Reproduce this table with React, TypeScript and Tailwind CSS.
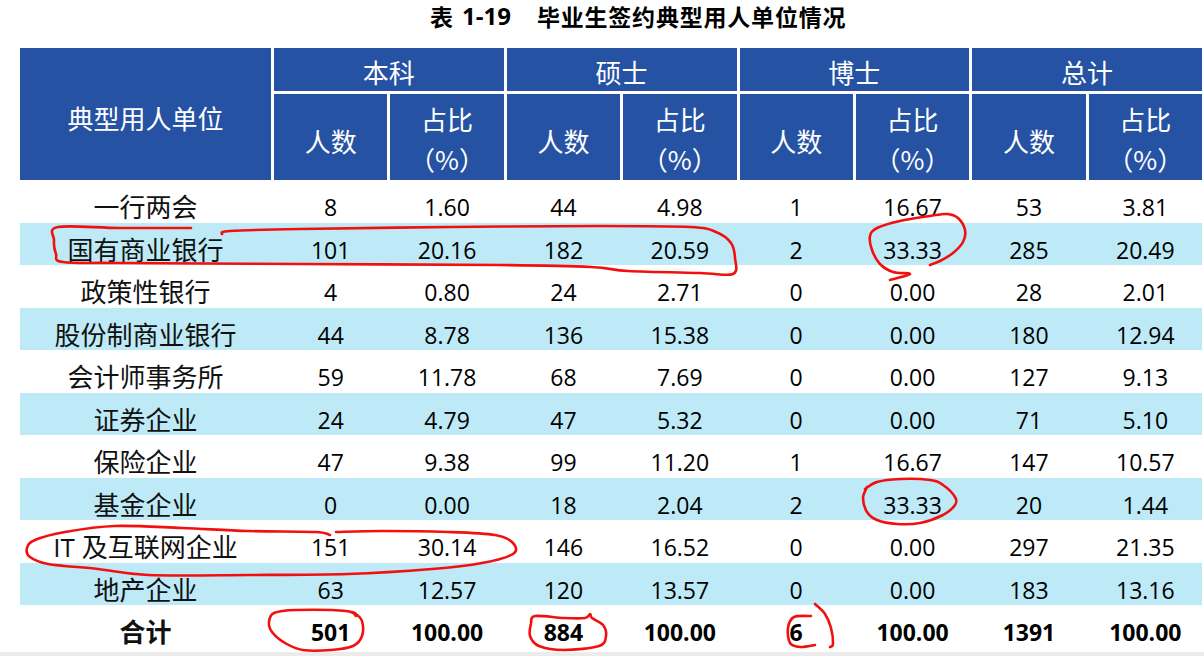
const rows: string[][] = [
  ['一行两会', '8', '1.60', '44', '4.98', '1', '16.67', '53', '3.81'],
  ['国有商业银行', '101', '20.16', '182', '20.59', '2', '33.33', '285', '20.49'],
  ['政策性银行', '4', '0.80', '24', '2.71', '0', '0.00', '28', '2.01'],
  ['股份制商业银行', '44', '8.78', '136', '15.38', '0', '0.00', '180', '12.94'],
  ['会计师事务所', '59', '11.78', '68', '7.69', '0', '0.00', '127', '9.13'],
  ['证券企业', '24', '4.79', '47', '5.32', '0', '0.00', '71', '5.10'],
  ['保险企业', '47', '9.38', '99', '11.20', '1', '16.67', '147', '10.57'],
  ['基金企业', '0', '0.00', '18', '2.04', '2', '33.33', '20', '1.44'],
  ['IT 及互联网企业', '151', '30.14', '146', '16.52', '0', '0.00', '297', '21.35'],
  ['地产企业', '63', '12.57', '120', '13.57', '0', '0.00', '183', '13.16'],
];

const total = ['合计', '501', '100.00', '884', '100.00', '6', '100.00', '1391', '100.00'];

const groups = ['本科', '硕士', '博士', '总计'];

// hand-drawn red marks, traced from the screenshot
const marks: number[][][] = [
  [[191, 228], [120, 228], [58, 227], [54, 240], [56, 254], [63, 262], [120, 263], [300, 264], [500, 265], [591, 267], [628, 271], [700, 273], [733, 274], [735, 258], [731, 243], [716, 232], [690, 227], [600, 226], [450, 227], [300, 229], [230, 231], [222, 234]],
  [[890, 280], [910, 274], [893, 272], [880, 264], [872, 250], [870, 236], [877, 228], [900, 221], [930, 216], [947, 214], [958, 218], [965, 230], [963, 242], [953, 253], [940, 261], [930, 265]],
  [[867, 487], [863, 498], [867, 512], [877, 520], [897, 524], [920, 523], [943, 515], [955, 505], [955, 497], [943, 485], [930, 480], [900, 479], [877, 482], [865, 489]],
  [[330, 535], [315, 532], [248, 531], [182, 528], [115, 526], [65, 532], [35, 540], [27, 548], [30, 557], [48, 564], [98, 569], [148, 575], [248, 575], [348, 574], [432, 569], [482, 563], [513, 554], [513, 543], [495, 535], [448, 532], [382, 531], [336, 532]],
  [[356, 616], [346, 611], [296, 610], [274, 613], [269, 622], [272, 632], [285, 643], [303, 650], [331, 650], [353, 646], [362, 636], [362, 621], [356, 614], [352, 612]],
  [[531, 623], [535, 616], [564, 618], [585, 618], [590, 614], [592, 618], [603, 625], [606, 636], [599, 646], [564, 650], [539, 646], [530, 636], [531, 623]],
  [[815, 604], [825, 614], [831, 628], [833, 644], [830, 647]],
  [[811, 616], [794, 617], [788, 628], [790, 643], [800, 647], [815, 645]],
];

function smooth(pts: number[][]) {
  let d = `M${pts[0][0]},${pts[0][1]}`;
  for (let i = 0; i < pts.length - 1; i++) {
    const p0 = pts[i - 1] || pts[i];
    const p1 = pts[i];
    const p2 = pts[i + 1];
    const p3 = pts[i + 2] || p2;
    const c1x = p1[0] + (p2[0] - p0[0]) / 6;
    const c1y = p1[1] + (p2[1] - p0[1]) / 6;
    const c2x = p2[0] - (p3[0] - p1[0]) / 6;
    const c2y = p2[1] - (p3[1] - p1[1]) / 6;
    d += ` C${c1x},${c1y} ${c2x},${c2y} ${p2[0]},${p2[1]}`;
  }
  return d;
}

function Row({ cells, shaded, bold }: { cells: string[]; shaded?: boolean; bold?: boolean }) {
  return (
    <div
      className={`grid grid-cols-[251px_repeat(8,minmax(0,1fr))] gap-x-[3px] h-[42.5px] ${
        shaded ? 'bg-[#bdeaf6]' : 'bg-white'
      } ${bold ? 'font-bold' : ''}`}
    >
      <div className="flex items-center justify-center pt-[8px] text-[26px] text-[#111] font-['Open_Sans','Noto_Sans_CJK_SC',sans-serif]">
        {cells[0]}
      </div>
      {cells.slice(1).map((c, i) => (
        <div
          key={i}
          className="flex items-center justify-center pt-[8px] text-[23px] text-black font-['Open_Sans',sans-serif]"
        >
          {c}
        </div>
      ))}
    </div>
  );
}

export default function App() {
  return (
    <div className="relative w-[1204px] h-[656px] bg-white overflow-hidden flex flex-col font-['Noto_Sans_CJK_SC',sans-serif]">
      <div className="h-[48px] flex items-start pl-[430px] text-[23px] font-bold text-black leading-[32px]">
        <span>表</span>
        <span className="ml-[9px] text-[24px] font-['Open_Sans',sans-serif]">1-19</span>
        <span className="ml-[26px] tracking-[0.8px]">毕业生签约典型用人单位情况</span>
      </div>

      <div className="ml-[20px] w-[1182px]">
        <div className="grid grid-cols-[251px_repeat(8,minmax(0,1fr))] grid-rows-[43px_86px] gap-[3px] text-white text-[26px]">
          <div className="row-span-2 bg-[#2552a3] flex items-center justify-center pt-[6px]">典型用人单位</div>
          {groups.map((g) => (
            <div key={g} className="col-span-2 bg-[#2552a3] flex items-center justify-center pt-[4px]">
              {g}
            </div>
          ))}
          {groups.map((g) => [
            <div key={g + 'a'} className="bg-[#2552a3] flex items-center justify-center pt-[6px]">
              人数
            </div>,
            <div key={g + 'b'} className="bg-[#2552a3] flex flex-col items-center justify-center pt-[4px] leading-[40px]">
              <span>占比</span>
              <span>（%）</span>
            </div>,
          ])}
        </div>

        {rows.map((r, i) => (
          <Row key={r[0]} cells={r} shaded={i % 2 === 1} />
        ))}
        <Row cells={total} bold />
      </div>

      <div className="mt-[4px] flex-1 bg-[#ececec]" />

      <svg
        className="absolute inset-0 pointer-events-none"
        width="1204"
        height="656"
        viewBox="0 0 1204 656"
        fill="none"
      >
        {marks.map((m, i) => (
          <path key={i} d={smooth(m)} stroke="#f2100f" strokeWidth="2.6" strokeLinecap="round" strokeLinejoin="round" />
        ))}
      </svg>
    </div>
  );
}
